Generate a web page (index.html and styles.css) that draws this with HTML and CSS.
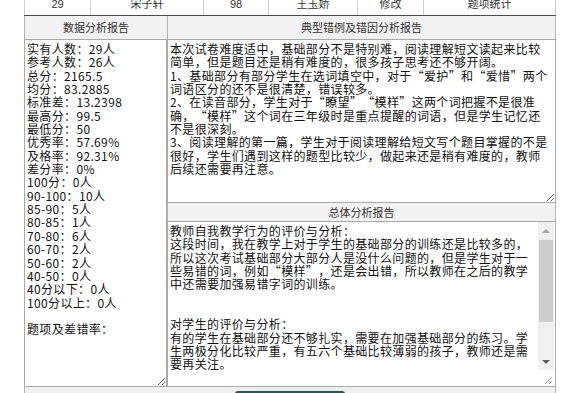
FILE: index.html
```html
<!DOCTYPE html>
<html lang="zh-CN">
<head>
<meta charset="utf-8">
<title>成绩分析</title>
<link rel="stylesheet" href="styles.css">
</head>
<body>
<div class="sheet">
  <div class="toprow">
    <div class="c">29</div>
    <div class="c green">宋子轩</div>
    <div class="c">98</div>
    <div class="c">王玉娇</div>
    <div class="c green">修改</div>
    <div class="c green">题项统计</div>
  </div>
  <div class="report">
    <div class="col col-left">
      <div class="head">数据分析报告</div>
      <textarea class="ta ta-left">实有人数：29人
参考人数：26人
总分：2165.5
均分：83.2885
标准差：13.2398
最高分：99.5
最低分：50
优秀率：57.69%
及格率：92.31%
差分率：0%
100分：0人
90-100：10人
85-90：5人
80-85：1人
70-80：6人
60-70：2人
50-60：2人
40-50：0人
40分以下：0人
100分以上：0人

题项及差错率：</textarea>
    </div>
    <div class="col col-right">
      <div class="head">典型错例及错因分析报告</div>
      <textarea class="ta ta-rtop">本次试卷难度适中，基础部分不是特别难，阅读理解短文读起来比较
简单，但是题目还是稍有难度的，很多孩子思考还不够开阔。
1、基础部分有部分学生在选词填空中，对于“爱护”和“爱惜”两个
词语区分的还不是很清楚，错误较多。
2、在读音部分，学生对于“瞭望”“模样”这两个词把握不是很准
确，“模样”这个词在三年级时是重点提醒的词语，但是学生记忆还
不是很深刻。
3、阅读理解的第一篇，学生对于阅读理解给短文写个题目掌握的不是
很好，学生们遇到这样的题型比较少，做起来还是稍有难度的，教师
后续还需要再注意。</textarea>
      <div class="head small">总体分析报告</div>
      <div class="scrollbox">
        <textarea class="ta ta-rbot">教师自我教学行为的评价与分析：
这段时间，我在教学上对于学生的基础部分的训练还是比较多的，
所以这次考试基础部分大部分人是没什么问题的，但是学生对于一
些易错的词，例如“模样”，还是会出错，所以教师在之后的教学
中还需要加强易错字词的训练。


对学生的评价与分析：
有的学生在基础部分还不够扎实，需要在加强基础部分的练习。学
生两极分化比较严重，有五六个基础比较薄弱的孩子，教师还是需
要再关注。</textarea>
        <div class="vscroll">
          <div class="arrow"><span class="tri up"></span></div>
          <div class="track"><div class="thumb"></div></div>
          <div class="arrow"><span class="tri down"></span></div>
          <div class="corner">
            <svg width="14" height="14" viewBox="0 0 14 14"><path d="M12 5 L5 12 M12 9 L9 12" stroke="#9a9a9a" stroke-width="1" fill="none"/></svg>
          </div>
        </div>
      </div>
    </div>
  </div>
  <div class="footer"><div class="btn"></div></div>
</div>
</body>
</html>
```

FILE: styles.css
```css
* { box-sizing: border-box; }

body {
  margin: 0;
  background: #ffffff;
  font-family: "Noto Sans CJK SC", sans-serif;
  font-size: 12px;
  color: #333333;
  overflow: hidden;
}

.sheet {
  width: 532px;
  margin: -7px 0 0 24px;
}

.toprow {
  display: grid;
  grid-template-columns: 67px 113px 65px 89px 66px 132px;
  height: 23px;
  border-bottom: 1px solid #4a4a4a;
}

.toprow .c {
  border-right: 1px solid #d0d0d0;
  text-align: center;
  line-height: 22px;
  font-family: "Liberation Sans", "Noto Sans CJK SC", sans-serif;
  font-size: 11px;
  color: #333333;
}

.toprow .c:first-child { border-left: 1px solid #d0d0d0; }

.green { color: #2e8c2e; }

.report {
  display: grid;
  grid-template-columns: 143px 389px;
}

.col {
  display: flex;
  flex-direction: column;
}

.head {
  background: #f2f2f2;
  text-align: center;
  color: #333333;
  height: 23px;
  line-height: 23px;
  font-size: 11px;
  border-left: 1px solid #b4b4b4;
}

.col-right .head { border-right: 1px solid #b4b4b4; }

.head.small {
  height: 18px;
  line-height: 18px;
}

.ta {
  display: block;
  width: 100%;
  margin: 0;
  border: 1px solid #a9a9a9;
  padding: 2px 1px 2px 2px;
  font-family: "Noto Sans CJK SC", "Liberation Sans", sans-serif;
  font-size: 12px;
  line-height: 13.35px;
  letter-spacing: 0.35px;
  font-kerning: none;
  text-spacing-trim: space-all;
  color: #111111;
  background: #ffffff;
  overflow: hidden;
  outline: none;
}

.ta-left { height: 348px; }
.ta-rtop { height: 164px; }

.scrollbox {
  display: flex;
  height: 166px;
  border: 1px solid #a9a9a9;
  background: #ffffff;
}

.scrollbox .ta {
  border: 0;
  height: 100%;
  resize: none;
  flex: 1;
}

.vscroll {
  width: 16px;
  margin-right: 1px;
  display: flex;
  flex-direction: column;
  background: #f0f0f0;
}

.arrow {
  height: 17px;
  display: flex;
  align-items: center;
  justify-content: center;
}

.tri {
  width: 0;
  height: 0;
  border-left: 4px solid transparent;
  border-right: 4px solid transparent;
}

.tri.up { border-bottom: 4px solid #a3a3a3; }
.tri.down { border-top: 4px solid #606060; }

.track {
  flex: 1;
  padding: 1px 1px 0 1px;
}

.thumb {
  height: 82px;
  background: #cdcdcd;
}

.corner {
  height: 16px;
  background: #ffffff;
  display: flex;
  align-items: flex-end;
  justify-content: flex-end;
}

.corner svg { display: block; }

.footer {
  height: 20px;
  background: #efefef;
  border-left: 1px solid #b4b4b4;
  border-right: 1px solid #b4b4b4;
  display: flex;
  justify-content: center;
  padding-top: 4px;
}

.btn {
  width: 110px;
  height: 14px;
  background: #2b5552;
  border-radius: 3px 3px 0 0;
}
```
